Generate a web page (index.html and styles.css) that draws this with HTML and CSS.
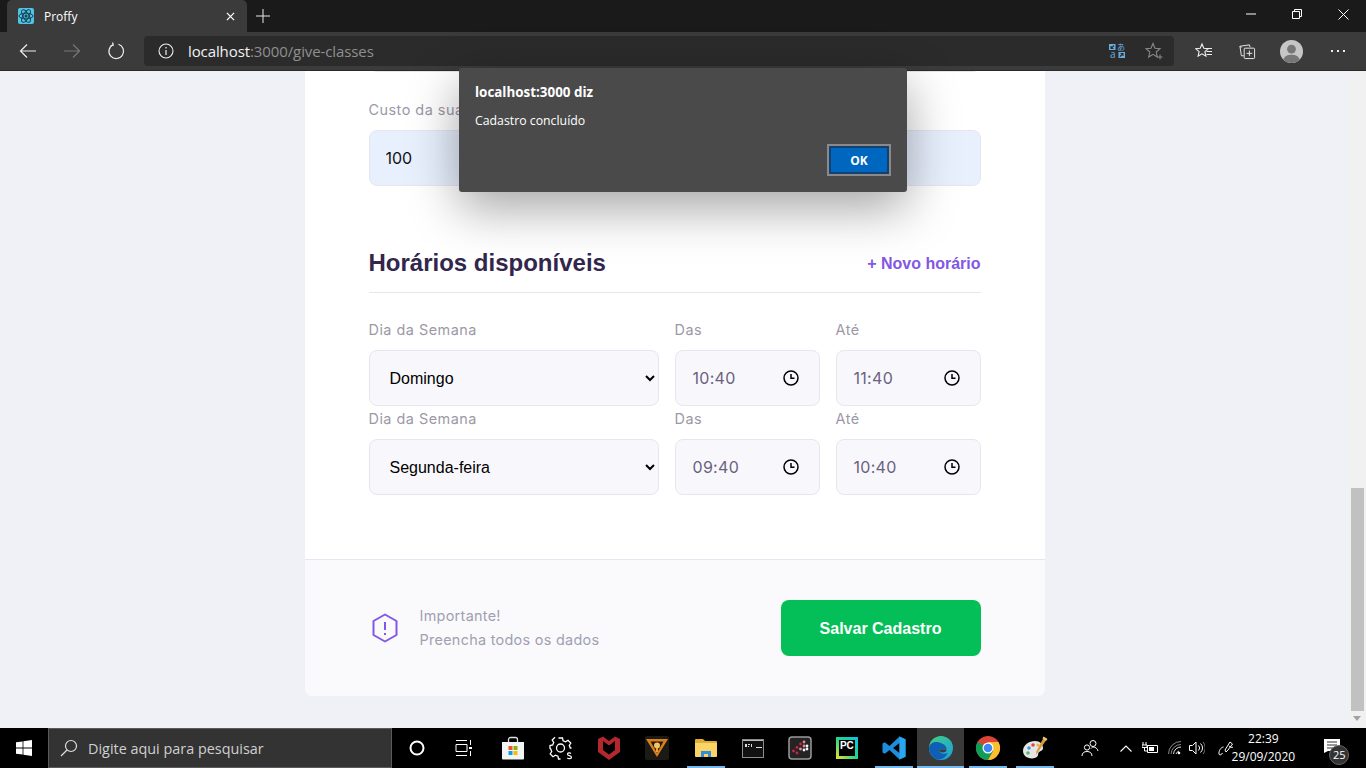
FILE: index.html
```html
<!DOCTYPE html>
<html lang="pt-BR">
<head>
    <meta charset="UTF-8">
    <title>Proffy</title>
    <link rel="stylesheet" href="styles.css">
</head>
<body>
<div class="screen">

    <!-- browser title bar -->
    <div class="titlebar">
        <div class="tab">
            <svg class="tab-logo" viewBox="0 0 16 16">
                <rect width="16" height="16" rx="2" fill="#4fc3e8"/>
                <g fill="none" stroke="#16414f" stroke-width="1">
                    <ellipse cx="8" cy="8" rx="7" ry="2.8"/>
                    <ellipse cx="8" cy="8" rx="7" ry="2.8" transform="rotate(60 8 8)"/>
                    <ellipse cx="8" cy="8" rx="7" ry="2.8" transform="rotate(120 8 8)"/>
                </g>
                <circle cx="8" cy="8" r="1.5" fill="#16414f"/>
            </svg>
            <span class="tab-title">Proffy</span>
            <svg class="tab-close" viewBox="0 0 10 10"><path d="M1 1l8 8M9 1l-8 8" stroke="#fff" stroke-width="1.4"/></svg>
        </div>
        <svg class="new-tab" viewBox="0 0 14 14"><path d="M7 0v14M0 7h14" stroke="#e8e8e8" stroke-width="1"/></svg>
        <div class="window-controls">
            <div class="win-btn"><svg width="10" height="10" viewBox="0 0 10 10"><path d="M0 5h10" stroke="#fff"/></svg></div>
            <div class="win-btn"><svg width="10" height="10" viewBox="0 0 10 10"><path d="M.5 2.5h7v7h-7zM2.5 2.5v-2h7v7h-2" fill="none" stroke="#fff"/></svg></div>
            <div class="win-btn"><svg width="11" height="11" viewBox="0 0 11 11"><path d="M.5.5l10 10M10.5.5l-10 10" stroke="#fff"/></svg></div>
        </div>
    </div>

    <!-- browser toolbar -->
    <div class="toolbar">
        <svg class="nav-icon nav-back" viewBox="0 0 18 16"><path d="M17 8H1.500M8 1.500L1.500 8 8 14.500" fill="none" stroke="#eee" stroke-width="1.200"/></svg>
        <svg class="nav-icon nav-forward" viewBox="0 0 18 16"><path d="M1 8h15.500M10 1.500L16.500 8 10 14.500" fill="none" stroke="#777" stroke-width="1.200"/></svg>
        <svg class="nav-icon nav-reload" viewBox="0 0 18 18"><path d="M6 2.700A7.300 7.300 0 1 0 11.500 2.300M5.500.500L6.300 3 3.500 3.800" fill="none" stroke="#eee" stroke-width="1.200"/></svg>
        <div class="addressbar">
            <svg class="info-icon" viewBox="0 0 16 16"><circle cx="8" cy="8" r="7" fill="none" stroke="#eee" stroke-width="1.100"/><path d="M8 7v5M8 4v1.500" stroke="#eee" stroke-width="1.200"/></svg>
            <span class="url"><span class="url-host">localhost</span>:3000/give-classes</span>
            <div class="translate-icon">
                <svg viewBox="0 0 16 16">
                    <path d="M0 1h6.500v6H0z" fill="#6aaee0"/>
                    <path d="M5 2.500L2 5.500M2 3v2.500h2.500" fill="none" stroke="#2b2b2b" stroke-width="1.100"/>
                    <path d="M9.500 9H16v6H9.500z" fill="#6aaee0"/>
                    <path d="M11 13.500L14 10.500M14 13v-2.500h-2.500" fill="none" stroke="#2b2b2b" stroke-width="1.100"/>
                </svg>
                <span class="translate-kana">あ</span>
                <span class="translate-latin">a</span>
            </div>
            <svg class="star-icon" viewBox="0 0 18 18"><path d="M8 1.500l2 4.800 5 .4-3.800 3.300 1.100 5-4.300-2.600-4.300 2.600 1.100-5L1 6.700l5-.4z" fill="none" stroke="#8a8a8a" stroke-width="1.100"/><path d="M12.500 15h5M15 12.500v5" stroke="#8a8a8a"/></svg>
        </div>
        <svg class="tool-icon tool-favs" viewBox="0 0 18 18"><path d="M7 2l1.800 4.300 4.500.4-3.400 3 1 4.500L7 11.800l-3.900 2.400 1-4.500-3.400-3 4.500-.4z" fill="none" stroke="#eee" stroke-width="1.100"/><path d="M10 6.500h7M11.500 9.500H17M11.500 12.500H17" stroke="#eee"/></svg>
        <svg class="tool-icon tool-collections" viewBox="0 0 18 18"><path d="M2.500 5.500L1 4l10-1.500.8 2.500" fill="none" stroke="#eee"/><path d="M1 4l1.500 10H5" fill="none" stroke="#eee"/><rect x="5.500" y="6" width="11" height="11" rx="1" fill="#3b3b3b" stroke="#eee"/><path d="M11 8.500v6M8 11.500h6" stroke="#eee"/></svg>
        <svg class="avatar" viewBox="0 0 24 24"><circle cx="12" cy="12" r="12" fill="#c6c6c6"/><circle cx="12" cy="9.500" r="4.600" fill="#777"/><path d="M3.500 20.500C5 16.500 8 15.500 12 15.500s7 1 8.500 5a12 12 0 0 1-17 0z" fill="#777"/></svg>
        <div class="more-dots"><i></i><i></i><i></i></div>
    </div>

    <!-- page -->
    <div class="viewport">
        <main class="page">
            <div class="card">
                <div class="card-body">
                    <div class="input-box"></div>
                    <div class="cost-field">
                        <label class="field-label">Custo da sua hora por aula</label>
                        <div class="input-box input-filled">100</div>
                    </div>

                    <div class="section-head">
                        <h2>Horários disponíveis</h2>
                        <a class="add-link">+ Novo horário</a>
                    </div>

                    <div class="schedule-row">
                        <div>
                            <label class="field-label">Dia da Semana</label>
                            <select class="day-select"><option>Domingo</option></select>
                        </div>
                        <div>
                            <label class="field-label">Das</label>
                            <div class="input-box time-box">
                                <span>10:40</span>
                                <svg class="clock" viewBox="0 0 16 16"><circle cx="8" cy="8" r="7" fill="none" stroke="#000" stroke-width="1.500"/><path d="M8 4v4.300h3.500" fill="none" stroke="#000" stroke-width="1.500"/></svg>
                            </div>
                        </div>
                        <div>
                            <label class="field-label">Até</label>
                            <div class="input-box time-box">
                                <span>11:40</span>
                                <svg class="clock" viewBox="0 0 16 16"><circle cx="8" cy="8" r="7" fill="none" stroke="#000" stroke-width="1.500"/><path d="M8 4v4.300h3.500" fill="none" stroke="#000" stroke-width="1.500"/></svg>
                            </div>
                        </div>
                    </div>

                    <div class="schedule-row">
                        <div>
                            <label class="field-label">Dia da Semana</label>
                            <select class="day-select"><option>Segunda-feira</option></select>
                        </div>
                        <div>
                            <label class="field-label">Das</label>
                            <div class="input-box time-box">
                                <span>09:40</span>
                                <svg class="clock" viewBox="0 0 16 16"><circle cx="8" cy="8" r="7" fill="none" stroke="#000" stroke-width="1.500"/><path d="M8 4v4.300h3.500" fill="none" stroke="#000" stroke-width="1.500"/></svg>
                            </div>
                        </div>
                        <div>
                            <label class="field-label">Até</label>
                            <div class="input-box time-box">
                                <span>10:40</span>
                                <svg class="clock" viewBox="0 0 16 16"><circle cx="8" cy="8" r="7" fill="none" stroke="#000" stroke-width="1.500"/><path d="M8 4v4.300h3.500" fill="none" stroke="#000" stroke-width="1.500"/></svg>
                            </div>
                        </div>
                    </div>
                </div>

                <footer class="card-footer">
                    <div class="warning">
                        <svg class="warning-icon" viewBox="0 0 28 30"><path d="M14 1.500l11.500 6.500v14L14 28.500 2.500 22V8z" fill="none" stroke="#8257e5" stroke-width="2" stroke-linejoin="round"/><path d="M14 9v8M14 20v2" stroke="#8257e5" stroke-width="2"/></svg>
                        <p>Importante!<br>Preencha todos os dados</p>
                    </div>
                    <button class="save-btn" type="button">Salvar Cadastro</button>
                </footer>
            </div>
        </main>
        <div class="scrollbar">
            <div class="scroll-thumb"></div>
            <svg class="scroll-arrow" viewBox="0 0 8 5"><path d="M0 0h8L4 5z" fill="#a3a3a3"/></svg>
        </div>
    </div>

    <!-- windows taskbar -->
    <div class="taskbar">
        <div class="start-btn">
            <svg width="16" height="16" viewBox="0 0 16 16"><path d="M0 2.300l6.600-.9v6.200H0zM7.400 1.300L16 0v7.600H7.400zM0 8.400h6.600v6.200L0 13.700zM7.400 8.400H16V16l-8.600-1.300z" fill="#fff"/></svg>
        </div>
        <div class="search-box">
            <svg width="18" height="18" viewBox="0 0 18 18"><circle cx="11" cy="7" r="5.500" fill="none" stroke="#ddd" stroke-width="1.200"/><path d="M7 11l-6 6" stroke="#ddd" stroke-width="1.200"/></svg>
            <span>Digite aqui para pesquisar</span>
        </div>
        <div class="task-icons">
            <div class="task-btn task-narrow"><svg width="16" height="16" viewBox="0 0 16 16"><circle cx="8" cy="8" r="6.500" fill="none" stroke="#fff" stroke-width="2"/></svg></div>
            <div class="task-btn task-narrow task-gap"><svg width="18" height="16" viewBox="0 0 18 16"><path d="M1 .5h11M1 15.500h11M1 4.500h11v7H1zM15.500 0v5M15.500 11v5" fill="none" stroke="#fff"/><path d="M14 7h3v2h-3z" fill="#fff"/></svg></div>
            <div class="task-btn task-wide">
                <svg width="24" height="24" viewBox="0 0 24 24"><path d="M7.500 6V3.500a2 2 0 0 1 2-2h5a2 2 0 0 1 2 2V6" fill="none" stroke="#ddd" stroke-width="1.300"/><path d="M1 6h22v16.500a1 1 0 0 1-1 1H2a1 1 0 0 1-1-1z" fill="#f4f4f4"/><path d="M7.500 10h4v4h-4z" fill="#f25022"/><path d="M12.500 10h4v4h-4z" fill="#7fba00"/><path d="M7.500 15h4v4h-4z" fill="#00a4ef"/><path d="M12.500 15h4v4h-4z" fill="#ffb900"/></svg>
            </div>
            <div class="task-btn task-wide">
                <svg width="24" height="24" viewBox="0 0 24 24"><path d="M9 1.500h4l.6 2.800 2.500 1 2.400-1.500 2.800 2.800-1.500 2.400 1 2.500h1.200M11 22.500H9l-.6-2.800-2.500-1-2.400 1.500-2.800-2.800 1.500-2.400-1-2.500L.5 12V9l2.700-.6 1-2.500-1.500-2.400 2.800-2.800" fill="none" stroke="#fff" stroke-width="1.300" transform="translate(.5 .5)"/><circle cx="11.500" cy="12" r="4" fill="none" stroke="#fff" stroke-width="1.300"/><path d="M22 17.500c-1-1-3.500-.8-3.500.7 0 1.800 4 1 4 3 0 1.700-3 1.800-4.200.6" fill="none" stroke="#fff" stroke-width="1.200"/></svg>
            </div>
            <div class="task-btn task-wide">
                <svg width="22" height="24" viewBox="0 0 22 24"><path d="M0 3l5-2.500L11 5l6-4.500L22 3v13l-11 8L0 16z" fill="#b3282d"/><path d="M5 5v9l6 4.500 6-4.500V5l-6 4.500z" fill="#000"/></svg>
            </div>
            <div class="task-btn task-wide task-gap-small">
                <svg width="24" height="24" viewBox="0 0 24 24"><rect width="24" height="24" rx="2" fill="#1c1a14"/><path d="M1 3h22L12 21z" fill="#d8801e"/><path d="M5.500 5.500h13L12 17z" fill="#2a1a0c"/><circle cx="12" cy="9.500" r="3" fill="#f2c46a"/><path d="M11 12h2v4h-2z" fill="#e8a33c"/></svg>
            </div>
            <div class="task-btn task-open">
                <svg width="22" height="18" viewBox="0 0 22 18"><path d="M0 1a1 1 0 0 1 1-1h7l2 2h11a1 1 0 0 1 1 1v2H0z" fill="#e0ad35"/><path d="M0 4h22v13a1 1 0 0 1-1 1H1a1 1 0 0 1-1-1z" fill="#fbd467"/><path d="M6 12h10v6h-3v-3H9v3H6z" fill="#2f8fd8"/></svg>
            </div>
            <div class="task-btn">
                <svg width="22" height="19" viewBox="0 0 22 19"><rect x=".5" y=".5" width="21" height="18" fill="#111" stroke="#8c8c8c"/><path d="M1 1h20v1H1z" fill="#bbb"/><path d="M3 5h2v3H3zM6 5h2v1H6zM6 7h1v1H6zM9 5h1v3H9zM14 8h6v1h-6z" fill="#ddd"/></svg>
            </div>
            <div class="task-btn">
                <svg width="24" height="24" viewBox="0 0 24 24"><rect x="1" y="1" width="22" height="22" rx="3" fill="#242426" stroke="#9a9a9a" stroke-width="1.500"/><g fill="#c8283a"><circle cx="5.500" cy="15" r="1.400"/><circle cx="9" cy="11.500" r="1.400"/><circle cx="9" cy="17" r="1.400"/><circle cx="12.500" cy="8" r="1.400"/></g><g fill="#e88a9a"><circle cx="12.500" cy="13" r="1.400"/><circle cx="16" cy="6" r="1.400"/><circle cx="16" cy="10" r="1.400"/></g><g fill="#f5f5f5"><circle cx="19" cy="10" r="1.400"/><circle cx="16" cy="14" r="1.400"/><circle cx="19" cy="13" r="1.400"/></g></svg>
            </div>
            <div class="task-btn">
                <div class="pycharm"><span class="pc-text">PC</span></div>
            </div>
            <div class="task-btn task-open">
                <svg width="24" height="24" viewBox="0 0 24 24"><path d="M17.500.5L23.500 3.200v17.600l-6 2.700L7.500 14 2.800 17.700.5 16.500v-9l2.300-1.200L7.500 10z" fill="#1b8fdc"/><path d="M17.500 7L11 12l6.500 5z" fill="#000"/><path d="M17.500.5l6 2.700v17.600l-6 2.700z" fill="#2aa5ee"/></svg>
            </div>
            <div class="task-btn task-active task-open">
                <svg width="24" height="24" viewBox="0 0 24 24"><defs><linearGradient id="edgeGrad" x1="0" y1="0" x2="1" y2="1"><stop offset="0" stop-color="#43d17c"/><stop offset="1" stop-color="#1b9de2"/></linearGradient></defs><circle cx="12" cy="12" r="12" fill="url(#edgeGrad)"/><path d="M0 12C1 6 7 5 12 7c4 1.600 6 4 5.500 6.500H10c0 3 3.500 5.500 9 3.500-2 4-6 7-10 6.500C3 22 0 17 0 12z" fill="#0f5fb8"/><path d="M10 13.500h7.500c.3 2-1.500 3-4 3-2 0-3.500-1.500-3.500-3z" fill="#3c3c3c"/></svg>
            </div>
            <div class="task-btn task-open">
                <svg width="24" height="24" viewBox="0 0 24 24"><circle cx="12" cy="12" r="12" fill="#db4437"/><path d="M12 12L1.600 6A12 12 0 0 0 12 24l5.200-9z" fill="#0f9d58"/><path d="M12 6h10.400A12 12 0 0 1 12 24l5.200-9z" fill="#fbc02d"/><circle cx="12" cy="12" r="5.500" fill="#fff"/><circle cx="12" cy="12" r="4.300" fill="#4285f4"/></svg>
            </div>
            <div class="task-btn task-open">
                <svg width="26" height="24" viewBox="0 0 26 24"><path d="M1 15C1 9 7 5 13 5c5 0 8 3 8 7 0 3-3 3-4 4-1.500 1.500 0 4-3 5.500C8 24 1 21 1 15z" fill="#e6e6e6"/><circle cx="7" cy="12" r="1.800" fill="#3c9bd8"/><circle cx="11" cy="9" r="1.800" fill="#e0483e"/><circle cx="6" cy="17" r="1.800" fill="#5cb85c"/><circle cx="16" cy="9" r="1.500" fill="#f0ad3e"/><path d="M22 1l3 2-9 13-2 3 .5-4z" fill="#d79a3a"/><path d="M21.500.5L25.500 3l-1.500 2-3.500-2.500z" fill="#e9c46a"/></svg>
            </div>
        </div>
        <div class="tray">
            <svg class="tray-people" width="18" height="18" viewBox="0 0 18 18"><circle cx="12" cy="4.500" r="3" fill="none" stroke="#fff"/><circle cx="6" cy="8.500" r="2.600" fill="none" stroke="#fff"/><path d="M1 17c0-3 2-4.500 5-4.500s5 1.500 5 4.500M10 9.500c1-1 1.500-1.500 2-1.500 2.500 0 4.500 1.500 5 4" fill="none" stroke="#fff"/></svg>
            <svg class="tray-chevron" width="12" height="7" viewBox="0 0 12 7"><path d="M.5 6.500L6 1l5.500 5.500" fill="none" stroke="#fff" stroke-width="1.100"/></svg>
            <svg class="tray-battery" width="16" height="12" viewBox="0 0 16 12"><path d="M5.500 3.500h10v7h-10z" fill="none" stroke="#fff"/><path d="M7 5h5v4H7z" fill="#fff"/><path d="M1 0v3M4 0v3M0 3h5v2.500H0zM2.500 5.500V9h3" fill="none" stroke="#fff"/></svg>
            <svg class="tray-wifi" width="14" height="14" viewBox="0 0 14 14"><path d="M.5 13A12.500 12.500 0 0 1 13 .5M3 13A10 10 0 0 1 13 3.500" fill="none" stroke="#888"/><path d="M5.500 13A7.500 7.500 0 0 1 13 6M8 13a5 5 0 0 1 3-3" fill="none" stroke="#ddd"/><circle cx="11" cy="12" r="1.300" fill="#fff"/></svg>
            <svg class="tray-volume" width="16" height="14" viewBox="0 0 16 14"><path d="M.5 4.500h3l3.500-3.500v12l-3.500-3.500h-3z" fill="none" stroke="#fff"/><path d="M9.500 4.500a3.500 3.500 0 0 1 0 5M11.500 2.500a6 6 0 0 1 0 9" fill="none" stroke="#fff"/><path d="M14 1a9 9 0 0 1 0 12" fill="none" stroke="#777"/></svg>
            <svg class="tray-pen" width="16" height="16" viewBox="0 0 16 16"><path d="M7 10L12 2l2.500 2L10 10l-2 2zM11 6c1 1 3 2 4 1" fill="none" stroke="#fff"/><path d="M5.500 7C3 7 .5 11 1 14c.3 1.500 2.500 1 3.500-1" fill="none" stroke="#fff"/></svg>
            <div class="clock-text"><span>22:39</span><span>29/09/2020</span></div>
            <div class="notify">
                <svg width="16" height="14" viewBox="0 0 16 14"><path d="M0 0h16v12H4L0 14z" fill="#fff"/><path d="M3 3h10M3 6h10M3 9h7" stroke="#333"/></svg>
                <span class="notify-badge">25</span>
            </div>
        </div>
    </div>

    <!-- alert dialog -->
    <div class="alert">
        <strong>localhost:3000 diz</strong>
        <p>Cadastro concluído</p>
        <div class="alert-actions"><button type="button">OK</button></div>
    </div>
</div>
</body>
</html>
```

FILE: styles.css
```css
* { box-sizing: border-box; }
html, body { margin: 0; height: 100%; overflow: hidden; }
body { font-family: "Liberation Sans", Arial, sans-serif; }
svg { display: block; flex-shrink: 0; }

.screen { position: relative; height: 768px; display: flex; flex-direction: column; background: #000; }

/* title bar */
.titlebar { height: 32px; background: #1a1a1a; display: flex; align-items: center; flex-shrink: 0; }
.tab { width: 240px; height: 32px; margin: 0 0 0 7px; background: #3b3b3b; border-radius: 5px 5px 0 0; display: flex; align-items: center; padding: 0 0 0 11px; }
.tab-logo { width: 16px; height: 16px; }
.tab-title { margin-left: 10px; flex: 1; color: #fff; font: 12px "Open Sans", sans-serif; }
.tab-close { width: 9px; height: 9px; margin-right: 12px; }
.new-tab { width: 14px; height: 14px; margin-left: 9px; }
.window-controls { margin-left: auto; display: flex; align-self: flex-start; }
.win-btn { width: 46px; height: 28px; display: flex; align-items: center; justify-content: center; }

/* toolbar */
.toolbar { height: 39px; padding-top: 4px; background: #3b3b3b; border-bottom: 1px solid #2a2a2a; display: flex; align-items: flex-start; flex-shrink: 0; }
.nav-icon { height: 16px; margin-top: 7px; }
.nav-back { width: 18px; margin-left: 19px; }
.nav-forward { width: 18px; margin-left: 26px; }
.nav-reload { width: 18px; height: 18px; margin-left: 26px; margin-top: 6px; }
.addressbar { width: 1030px; height: 30px; margin-left: 19px; background: #2b2b2b; border-radius: 4px; display: flex; align-items: center; padding: 0 11px 0 14px; }
.info-icon { width: 16px; height: 16px; }
.url { margin-left: 14px; flex: 1; font: 15px "Open Sans", sans-serif; color: #8f8f8f; letter-spacing: -.1px; }
.url-host { color: #f2f2f2; }
.translate-icon { position: relative; width: 16px; height: 16px; color: #6aaee0; }
.translate-icon svg { width: 16px; height: 16px; }
.translate-kana { position: absolute; left: 8px; top: 0; font: 8px/8px "Noto Sans CJK JP", sans-serif; }
.translate-latin { position: absolute; left: 1px; top: 7px; font: 10px/9px "Open Sans", sans-serif; }
.star-icon { width: 18px; height: 18px; margin-left: 20px; }
.tool-icon { width: 18px; height: 18px; margin-top: 6px; }
.tool-favs { margin-left: 21px; }
.tool-collections { margin-left: 26px; width: 17px; }
.avatar { width: 23px; height: 23px; margin: 4px 0 0 24px; }
.more-dots { display: flex; gap: 4px; margin: 14px 0 0 28px; }
.more-dots i { width: 2px; height: 2px; background: #eee; }

/* page */
.viewport { flex: 1; min-height: 0; display: flex; background: #f0f0f7; }
.page { flex: 1; min-width: 0; overflow: hidden; display: flex; flex-direction: column; align-items: center; justify-content: flex-end; padding: 0 0 32px 0; }
.card { width: 740px; background: #fff; border-radius: 0 0 8px 8px; flex-shrink: 0; overflow: hidden; }
.card-body { padding: 0 64px 64px; }

.input-box { height: 56px; border: 1px solid #e6e6f0; border-radius: 8px; background: #f8f8fc; }
.input-filled { background: #e8f0fe; display: flex; align-items: center; padding: 0 16px; font: 16px/1 Inter, sans-serif; color: #111; }

.cost-field { margin-top: 25px; }
.field-label { display: block; height: 25px; margin-bottom: 8px; font: 14.4px/25px Inter, sans-serif; color: #9c98a6; letter-spacing: .5px; }

.section-head { margin-top: 60px; padding-bottom: 12px; border-bottom: 1px solid #e6e6f0; display: flex; align-items: center; justify-content: space-between; }
.section-head h2 { margin: 0; font: bold 24px/34px "Liberation Sans", Arial, sans-serif; color: #32264d; }
.add-link { margin-top: 2px; font: bold 16px/26px "Liberation Sans", Arial, sans-serif; color: #8257e5; }

.schedule-row { display: grid; grid-template-columns: 2fr 1fr 1fr; gap: 16px; }
.section-head + .schedule-row { margin-top: 24px; }
.day-select { width: 100%; height: 56px; padding: 0 18px 0 16px; border: 1px solid #e6e6f0; border-radius: 8px; background: #f8f8fc; font: 16px "Liberation Sans", Arial, sans-serif; color: #000; }
.time-box { display: flex; align-items: center; justify-content: space-between; padding: 0 20px 0 17px; font: 16px Inter, sans-serif; color: #6a6180; letter-spacing: .3px; }
.clock { width: 16px; height: 16px; }

.card-footer { height: 137px; padding: 40px 64px; border-top: 1px solid #e6e6f0; background: #fafafc; display: flex; align-items: center; justify-content: space-between; }
.warning { display: flex; align-items: center; }
.warning-icon { width: 28px; height: 30px; margin-left: 2px; }
.warning p { margin: 0 0 0 21px; font: 14.4px/24px Inter, sans-serif; color: #a0a0b2; letter-spacing: .3px; }
.save-btn { width: 200px; height: 56px; padding-top: 2px; border: 0; border-radius: 8px; background: #04bf58; color: #fff; font: bold 16px "Liberation Sans", Arial, sans-serif; }

.scrollbar { width: 17px; flex-shrink: 0; background: #f1f1f1; position: relative; }
.scroll-thumb { position: absolute; left: 2px; top: 417px; width: 13px; height: 223px; background: #c1c1c1; }
.scroll-arrow { position: absolute; left: 4px; top: 645px; width: 8px; height: 5px; }

/* taskbar */
.taskbar { height: 40px; background: #000; display: flex; align-items: center; flex-shrink: 0; }
.start-btn { width: 48px; height: 40px; flex-shrink: 0; display: flex; align-items: center; justify-content: center; }
.search-box { width: 344px; height: 40px; flex-shrink: 0; background: #333; border: 1px solid #5a5a5a; display: flex; align-items: center; padding-left: 11px; }
.search-box span { margin-left: 10px; color: #d0d0d0; font: 14.4px "Open Sans", sans-serif; }
.task-icons { display: flex; margin-left: 2px; flex-shrink: 0; }
.task-btn { width: 47px; height: 40px; display: flex; align-items: center; justify-content: center; position: relative; }
.task-narrow { width: 46.7px; }
.task-wide { width: 48px; }
.task-gap { margin-right: 2px; }
.task-gap-small { margin-right: 1px; }
.task-active { background: #3a3a3a; }
.task-open::after { content: ""; position: absolute; left: 4.500px; right: 4.500px; bottom: 0; height: 2px; background: #76b9ed; }
.task-active::after { left: 0; right: 0; }
.pycharm { width: 22px; height: 22px; padding: 3px; background: linear-gradient(45deg, #f5e428, #21d789 50%, #07c3f2); }
.pc-text { display: block; width: 16px; height: 16px; background: #000; color: #fff; font: bold 10px/11px "Liberation Sans", sans-serif; text-align: center; }

.tray { flex: 1; min-width: 0; display: flex; align-items: center; padding-left: 23px; color: #fff; }
.tray-chevron { margin-left: 21px; }
.tray-battery { margin-left: 10px; }
.tray-wifi { margin-left: 10px; }
.tray-volume { margin-left: 7px; }
.tray-pen { margin-left: 13px; }
.clock-text { width: 64px; margin-left: -3px; display: flex; flex-direction: column; align-items: center; gap: 2px; font: 12px/16px "Open Sans", sans-serif; }
.notify { position: relative; margin-left: 29px; margin-top: -4px; }
.notify-badge { position: absolute; left: 5px; top: 6px; width: 20px; height: 20px; border-radius: 50%; background: #333; border: 1px solid #666; color: #fff; font: 11px/18px "Open Sans", sans-serif; text-align: center; }

/* alert dialog */
.alert { position: absolute; left: 459px; top: 68px; width: 448px; height: 124px; padding: 16px; background: #4a4a4a; border-radius: 3px; box-shadow: 0 16px 50px rgba(0, 0, 0, .36); color: #fff; font: 12.3px "Open Sans", sans-serif; }
.alert strong { display: block; line-height: 17px; font-size: 13.4px; }
.alert p { margin: 11px 0 0; line-height: 17px; }
.alert-actions { display: flex; justify-content: flex-end; margin-top: 15px; }
.alert button { width: 64px; height: 32px; border: 2px solid #8a8a8a; outline: 2px solid #14406f; outline-offset: -4px; background: #0067c0; color: #fff; font: bold 12px "Open Sans", sans-serif; }
```
